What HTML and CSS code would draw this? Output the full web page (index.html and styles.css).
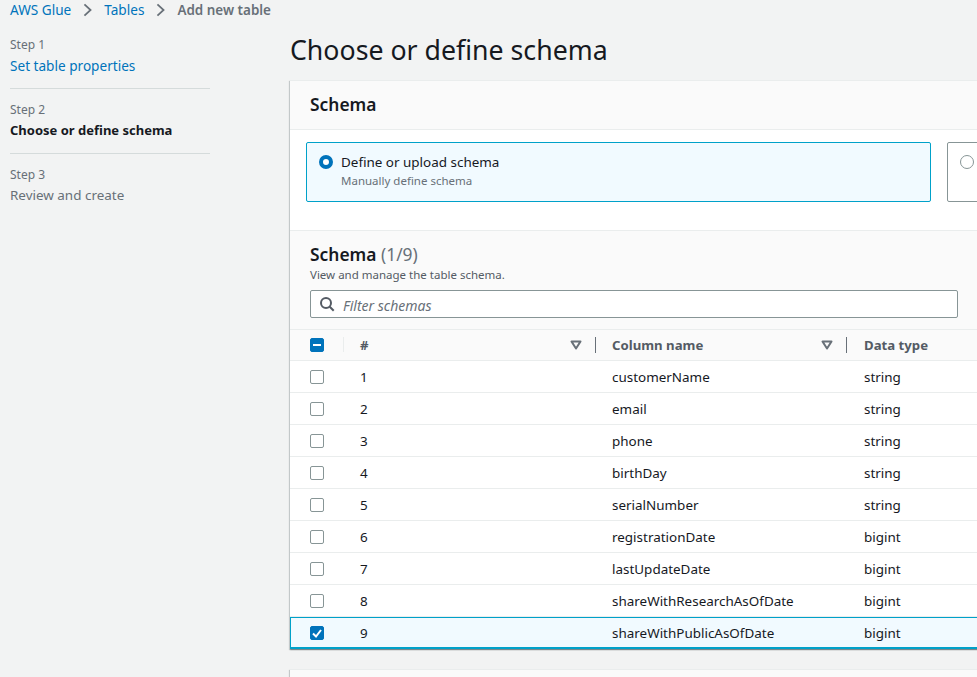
FILE: index.html
```html
<!DOCTYPE html>
<html lang="en">
<head>
  <meta charset="UTF-8" />
  <title>Add new table</title>
  <link rel="stylesheet" href="styles.css">
</head>
<body>
  <nav class="breadcrumbs">
    <a href="#">AWS Glue</a>
    <svg class="crumb-sep" viewBox="0 0 10 16"><path d="M1.5 1.5 8.5 8l-7 6.5" /></svg>
    <a href="#">Tables</a>
    <svg class="crumb-sep" viewBox="0 0 10 16"><path d="M1.5 1.5 8.5 8l-7 6.5" /></svg>
    <span class="crumb-current">Add new table</span>
  </nav>

  <div class="layout">
    <aside class="steps">
      <div class="step">
        <div class="step-num">Step 1</div>
        <a class="step-name" href="#">Set table properties</a>
      </div>
      <div class="step">
        <div class="step-num">Step 2</div>
        <div class="step-name current">Choose or define schema</div>
      </div>
      <div class="step">
        <div class="step-num">Step 3</div>
        <div class="step-name disabled">Review and create</div>
      </div>
    </aside>

    <main class="content">
      <h1>Choose or define schema</h1>

      <section class="panel">
        <div class="panel-head"><h2>Schema</h2></div>
        <div class="tiles">
          <div class="tile selected">
            <span class="radio on"></span>
            <div>
              <div class="tile-title">Define or upload schema</div>
              <div class="tile-desc">Manually define schema</div>
            </div>
          </div>
          <div class="tile">
            <span class="radio"></span>
          </div>
        </div>

        <div class="table-head">
          <h2>Schema <span class="count">(1/9)</span></h2>
          <p>View and manage the table schema.</p>
          <div class="filter">
            <svg class="search" viewBox="0 0 16 16"><circle cx="7" cy="7" r="5" /><path d="m10.7 10.7 4 4" /></svg>
            <span>Filter schemas</span>
          </div>
        </div>

        <table class="schema">
          <thead>
            <tr>
              <th class="col-check"><span class="check mixed"><svg viewBox="0 0 14 14"><path d="M3 7h8" /></svg></span></th>
              <th class="col-num"><div class="th-in">#<svg class="sort" viewBox="0 0 12 10"><path d="M1.5 1.5h9L6 8.5z" /></svg></div></th>
              <th class="col-name"><div class="th-in">Column name<svg class="sort" viewBox="0 0 12 10"><path d="M1.5 1.5h9L6 8.5z" /></svg></div></th>
              <th class="col-type">Data type</th>
            </tr>
          </thead>
          <tbody>
            <tr><td><span class="check"></span></td><td>1</td><td>customerName</td><td>string</td></tr>
            <tr><td><span class="check"></span></td><td>2</td><td>email</td><td>string</td></tr>
            <tr><td><span class="check"></span></td><td>3</td><td>phone</td><td>string</td></tr>
            <tr><td><span class="check"></span></td><td>4</td><td>birthDay</td><td>string</td></tr>
            <tr><td><span class="check"></span></td><td>5</td><td>serialNumber</td><td>string</td></tr>
            <tr><td><span class="check"></span></td><td>6</td><td>registrationDate</td><td>bigint</td></tr>
            <tr><td><span class="check"></span></td><td>7</td><td>lastUpdateDate</td><td>bigint</td></tr>
            <tr><td><span class="check"></span></td><td>8</td><td>shareWithResearchAsOfDate</td><td>bigint</td></tr>
            <tr class="picked"><td><span class="check on"><svg viewBox="0 0 14 14"><path d="m3 7.5 3 3 5-6.5" /></svg></span></td><td>9</td><td>shareWithPublicAsOfDate</td><td>bigint</td></tr>
          </tbody>
        </table>
      </section>

      <section class="panel next"></section>
    </main>
  </div>
</body>
</html>
```

FILE: styles.css
```css
* {
  box-sizing: border-box;
  margin: 0;
  padding: 0;
}

html, body {
  height: 677px;
  overflow: hidden;
}

body {
  font-family: 'Noto Sans', sans-serif;
  font-size: 13.45px;
  line-height: 18px;
  background-color: #f2f3f3;
  color: #16191f;
}

a {
  color: #0073bb;
  text-decoration: none;
}

/* Breadcrumbs */
.breadcrumbs {
  display: flex;
  align-items: center;
  height: 19px;
  padding-left: 10px;
  font-size: 13.6px;
}

.crumb-sep {
  width: 9px;
  height: 14px;
  margin: 0 12px;
  fill: none;
  stroke: #687078;
  stroke-width: 2;
}

.crumb-current {
  color: #687078;
  font-weight: 600;
  font-size: 13.45px;
}

/* Layout */
.layout {
  display: flex;
  width: 1100px;
}

.steps {
  width: 290px;
  padding: 17px 0 0 10px;
}

.step {
  width: 200px;
  height: 52px;
}

.step + .step {
  height: 65px;
  border-top: 1px solid #d5dbdb;
  padding-top: 11px;
}

.step-num {
  font-size: 12px;
  color: #687078;
  height: 21px;
}

.step + .step .step-num {
  padding-top: 1px;
}

.step-name {
  display: block;
  font-size: 13.6px;
}

.step-name.current {
  font-size: 13px;
  font-weight: 700;
}

.step-name.disabled {
  font-size: 13.45px;
  color: #687078;
}

.content {
  width: 810px;
}

h1 {
  font-size: 26.7px;
  font-weight: 400;
  line-height: 32px;
  margin: 15px 0 14px;
}

/* Panels */
.panel {
  background: #fff;
  border-top: 1px solid #eaeded;
  box-shadow: 0 1px 1px 0 rgba(0, 28, 36, 0.3), 1px 1px 1px 0 rgba(0, 28, 36, 0.15), -1px 1px 1px 0 rgba(0, 28, 36, 0.15);
}

.panel.next {
  height: 60px;
  margin-top: 20px;
  background: #fafafa;
}

.panel-head {
  height: 49px;
  padding: 12px 20px 0;
  background: #fafafa;
  border-bottom: 1px solid #eaeded;
}

h2 {
  font-size: 17.4px;
  font-weight: 600;
  line-height: 22px;
}

.tiles {
  display: flex;
  gap: 16px;
  height: 100px;
  padding: 12px 0 0 16px;
}

.tile {
  display: flex;
  gap: 8px;
  flex: none;
  width: 625px;
  height: 60px;
  padding: 10px 12px;
  border: 1px solid #879596;
  border-radius: 2px;
}

.tile.selected {
  border-color: #00a1c9;
  background: #f1faff;
}

.radio {
  flex: none;
  width: 14px;
  height: 14px;
  margin-top: 2px;
  border: 1px solid #879596;
  border-radius: 50%;
  background: #fff;
}

.radio.on {
  border: 4px solid #0073bb;
}

.tile-title {
  line-height: 18px;
}

.tile-desc {
  font-size: 11.5px;
  line-height: 20px;
  color: #687078;
}

/* Table header */
.table-head {
  height: 100px;
  padding: 12px 20px 0;
  background: #fafafa;
  border-top: 1px solid #eaeded;
  border-bottom: 1px solid #eaeded;
}

.count {
  font-weight: 400;
  color: #687078;
}

.table-head p {
  font-size: 11.5px;
  line-height: 20px;
  color: #545b64;
}

.filter {
  display: flex;
  align-items: center;
  gap: 8px;
  width: 648px;
  height: 28px;
  margin-top: 5px;
  padding-left: 8px;
  background: #fff;
  border: 1px solid #879596;
  border-radius: 2px;
  color: #687078;
  font-size: 14px;
  font-style: italic;
}

.filter span {
  padding-top: 3px;
}

.search {
  width: 16px;
  height: 16px;
  fill: none;
  stroke: #545b64;
  stroke-width: 2;
}

/* Table */
.schema {
  width: 100%;
  table-layout: fixed;
  border-collapse: collapse;
}

.col-check { width: 54px; }
.col-num { width: 252px; }
.col-name { width: 251px; }

.schema th {
  height: 30px;
  padding-top: 1px;
  text-align: left;
  font-size: 13.2px;
  font-weight: 700;
  color: #545b64;
  background: #fafafa;
  border-bottom: 1px solid #eaeded;
}

.schema td {
  height: 32px;
  padding-top: 2px;
  border-bottom: 1px solid #eaeded;
}

.schema th:first-child,
.schema td:first-child {
  padding-left: 20px;
  line-height: 0;
}

.schema th:nth-child(2),
.schema td:nth-child(2) {
  padding-left: 16px;
}

.schema th:nth-child(3),
.schema td:nth-child(3) {
  padding-left: 16px;
}

.schema th:nth-child(4),
.schema td:nth-child(4) {
  padding-left: 17px;
}

.col-check {
  position: relative;
}

.col-check::after {
  content: "";
  position: absolute;
  top: 7px;
  right: 0;
  height: 15px;
  border-right: 1px solid #eaeded;
}

.th-in {
  display: flex;
  align-items: center;
  justify-content: space-between;
  height: 16px;
  padding-right: 13px;
  border-right: 1px solid #687078;
}

.sort {
  width: 12px;
  height: 10px;
  fill: none;
  stroke: #687078;
  stroke-width: 2;
  stroke-linejoin: round;
}

.check {
  display: inline-block;
  width: 14px;
  height: 14px;
  border: 1px solid #879596;
  border-radius: 2px;
  background: #fff;
  vertical-align: middle;
}

.check svg {
  display: block;
  width: 14px;
  height: 14px;
  margin: -1px;
  fill: none;
  stroke: #fff;
  stroke-width: 2;
}

.check.on,
.check.mixed {
  border-color: #0073bb;
  background: #0073bb;
}

.picked td {
  background: #f1faff;
  box-shadow: inset 0 1px 0 #00a1c9;
  border-bottom: 2px solid #00a1c9;
}

.picked td:first-child {
  box-shadow: inset 0 1px 0 #00a1c9, inset 1px 0 0 #00a1c9;
}
```
